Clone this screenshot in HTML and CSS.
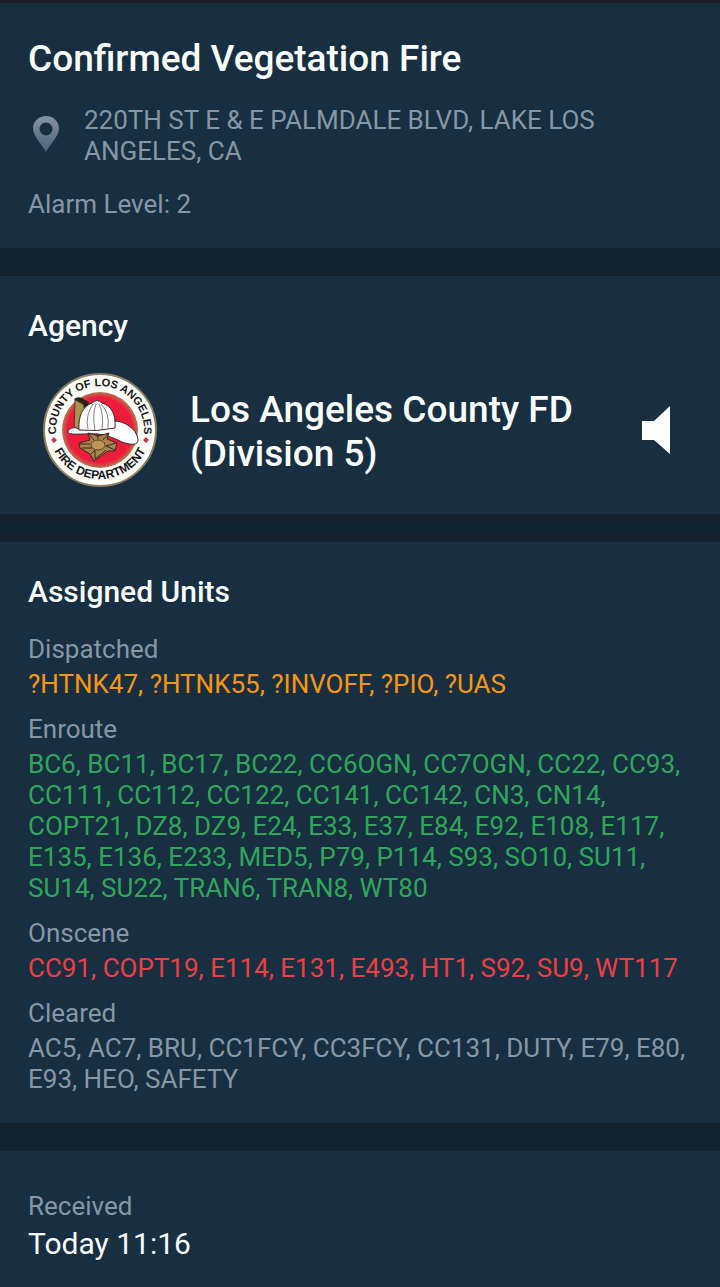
FILE: index.html
```
<!DOCTYPE html>
<html lang="en">
<head>
    <meta charset="UTF-8">
    <meta name="viewport" content="width=device-width, initial-scale=1.0">
    <title>Confirmed Vegetation Fire</title>
    <link rel="stylesheet" href="styles.css">
</head>
<body>

    <main id="incident">

        <section class="card summary">
            <h1>Confirmed Vegetation Fire</h1>
            <div class="address">
                <svg class="pin" viewBox="0 0 28 36" aria-hidden="true">
                    <defs>
                        <linearGradient id="pin-fill" x1="0" y1="0" x2="0" y2="1">
                            <stop offset="0" stop-color="#8793a3"/>
                            <stop offset="1" stop-color="#4b6078"/>
                        </linearGradient>
                    </defs>
                    <path fill="url(#pin-fill)" fill-rule="evenodd" d="M14 0C6.500 0 1 5.500 1 12.500C1 20 9 27 14 36C19 27 27 20 27 12.500C27 5.500 21.500 0 14 0ZM14 6.500A6.500 6.500 0 1 1 14 19.500A6.500 6.500 0 1 1 14 6.500Z"/>
                </svg>
                <p>220TH ST E &amp; E PALMDALE BLVD, LAKE LOS ANGELES, CA</p>
            </div>
            <p>Alarm Level: 2</p>
        </section>

        <section class="card agency">
            <h2>Agency</h2>
            <div class="agency-row">
                <svg class="seal" viewBox="0 0 116 116" role="img" aria-label="County of Los Angeles Fire Department">
                    <defs>
                        <radialGradient id="seal-red">
                            <stop offset="0.860" stop-color="#ee1c3b"/>
                            <stop offset="1" stop-color="#b4774f"/>
                        </radialGradient>
                        <path id="arc-top" d="M16.650 73.050A44 44 0 1 1 99.350 73.050"/>
                        <path id="arc-bottom" d="M8.200 67A51 51 0 0 0 107.800 67"/>
                    </defs>
                    <circle cx="58" cy="58" r="56" fill="#fffefa" stroke="#8b8060" stroke-width="2"/>
                    <circle cx="58" cy="58" r="38" fill="url(#seal-red)"/>
                    <text class="seal-text seal-top"><textPath href="#arc-top" startOffset="50%">COUNTY OF LOS ANGELES</textPath></text>
                    <text class="seal-text"><textPath href="#arc-bottom" startOffset="50%">FIRE DEPARTMENT</textPath></text>
                    <path fill="#c7374a" d="M12 65l3 3-3 3-3-3zM104 65l3 3-3 3-3-3z"/>
                    <!-- helmet -->
                    <path fill="#2b2019" d="M32 27Q38 22 48 32L43 38Z"/>
                    <path fill="#ad9151" stroke="#4a3822" d="M33 28L41 32L43 38L38 60L32 59Z"/>
                    <path fill="#fff" stroke="#39272b" d="M26 60C26 57 31 54 37 57L72 49C82 49 94 56 96 67C97 74 88 73 80 70C72 66 65 63 56 62C44 61 26 64 26 60Z"/>
                    <path fill="#fff" stroke="#39272b" d="M37 58C36 44 41 34 50 31Q55 26 60 31C70 34 74 43 73 56Q54 60 37 58Z"/>
                    <path fill="none" stroke="#8d7f81" d="M51 32Q43 44 46 57M54 32Q50 43 53 58M57 32Q62 42 60 57M59 32Q68 41 66 56"/>
                    <!-- badge -->
                    <path fill="#a8854f" stroke="#3b2618" d="M46 61L56 64L67 61L65 67L75 71L73 79L66 79L52 89L48 82L38 76L37 71L48 68Z"/>
                    <path fill="none" stroke="#3b2618" d="M47 62L52 68M56 62V67M66 62L61 68M38 72H48M49 82L53 78L53 87L64 78M73 78L64 74L74 71M40 76L50 76"/>
                    <ellipse cx="56" cy="73" rx="7" ry="5" fill="#c0935a" stroke="#634123"/>
                </svg>
                <p class="agency-name">Los Angeles County FD (Division 5)</p>
                <button class="sound" type="button" aria-label="Play radio">
                    <svg viewBox="0 0 28 48" aria-hidden="true">
                        <path fill="#fff" d="M0 15H12L28 0V48L12 34H0Z"/>
                    </svg>
                </button>
            </div>
        </section>

        <section class="card units">
            <h2>Assigned Units</h2>
            <dl>
                <dt>Dispatched</dt>
                <dd class="dispatched">?HTNK47, ?HTNK55, ?INVOFF, ?PIO, ?UAS</dd>
                <dt>Enroute</dt>
                <dd class="enroute">BC6, BC11, BC17, BC22, CC6OGN, CC7OGN, CC22, CC93, CC111, CC112, CC122, CC141, CC142, CN3, CN14, COPT21, DZ8, DZ9, E24, E33, E37, E84, E92, E108, E117, E135, E136, E233, MED5, P79, P114, S93, SO10, SU11, SU14, SU22, TRAN6, TRAN8, WT80</dd>
                <dt>Onscene</dt>
                <dd class="onscene">CC91, COPT19, E114, E131, E493, HT1, S92, SU9, WT117</dd>
                <dt>Cleared</dt>
                <dd>AC5, AC7, BRU, CC1FCY, CC3FCY, CC131, DUTY, E79, E80, E93, HEO, SAFETY</dd>
            </dl>
        </section>

        <section class="card received">
            <p>Received</p>
            <time>Today 11:16</time>
        </section>

    </main>

</body>
</html>
```
FILE: styles.css
```
* {
    margin: 0;
    padding: 0;
    box-sizing: border-box;
}
html, body {
    min-height: 100%;
}
body {
    background-color: #182e41;
    color: #8797a5;
    font-family: Roboto, sans-serif;
    font-size: 26px;
    line-height: 31px;
}
#incident {
    display: flex;
    flex-direction: column;
    border-top: 3px solid #1b1d29;
}
.card {
    padding: 32px 28px 28px;
    border-bottom: 28px solid #13212e;
}
h1, h2, .agency-name, time {
    color: #fcffff;
}
h1 {
    font-size: 37px;
    font-weight: 500;
    line-height: 48px;
}
h2 {
    font-size: 30px;
    font-weight: 500;
    line-height: 36px;
}
.address {
    display: flex;
    align-items: center;
    gap: 22px;
    margin: 22px 0;
}
.address p {
    flex: 1;
}
.pin {
    flex: none;
    width: 28px;
    height: 36px;
    margin: 0 2px 4px 4px;
}
.agency {
    padding-bottom: 26px;
}
.agency-row {
    display: flex;
    align-items: center;
    margin-top: 28px;
    padding: 0 22px 0 14px;
}
.seal {
    flex: none;
    width: 116px;
    height: 116px;
}
.seal-text {
    fill: #171719;
    font-family: "Liberation Sans", sans-serif;
    font-size: 12px;
    font-weight: bold;
    text-anchor: middle;
}
.seal-top {
    font-size: 11px;
}
.agency-name {
    flex: 1;
    margin: 4px 32px 0;
    font-size: 37px;
    font-weight: 500;
    line-height: 44px;
}
.sound {
    flex: none;
    width: 28px;
    height: 48px;
    border: none;
    background: none;
    cursor: pointer;
}
.sound svg {
    display: block;
    width: 100%;
}
dl {
    margin-top: 24px;
}
dd {
    margin: 4px 0 14px;
}
dd:last-child {
    margin-bottom: 0;
}
.dispatched {
    color: #fb970f;
}
.enroute {
    color: #2fa75a;
}
.onscene {
    color: #ef3f43;
}
.received {
    padding-top: 40px;
    border-bottom: none;
}
time {
    display: block;
    font-size: 30px;
    line-height: 36px;
    margin-top: 4px;
}
```
